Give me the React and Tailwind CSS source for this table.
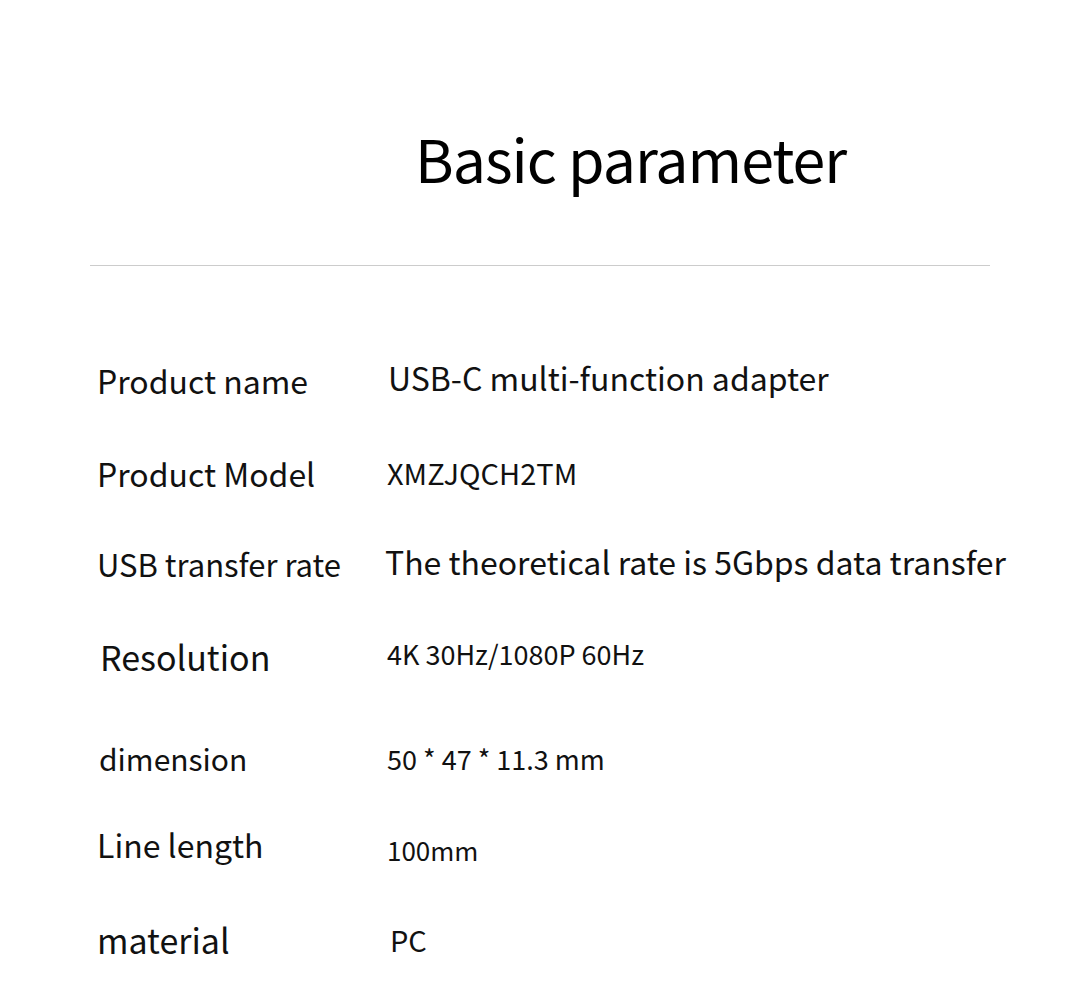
import React from 'react';

// each row: fixed height, label in a 290px column, value after it
const rows = [
    { label: 'Product name', value: 'USB-C multi-function adapter', h: 'h-[93px]', lCls: 'text-[32px] pt-[10px]', vCls: 'text-[32px] pt-[7px] pl-[1px]' },
    { label: 'Product Model', value: 'XMZJQCH2TM', h: 'h-[90px]', lCls: 'text-[32px] pt-[10px]', vCls: 'text-[29px] pt-[11px]' },
    { label: 'USB transfer rate', value: 'The theoretical rate is 5Gbps data transfer', h: 'h-[95px]', lCls: 'text-[31px] pt-[11px]', vCls: 'text-[32px] pt-[8px] -ml-[2px]' },
    { label: 'Resolution', value: '4K 30Hz/1080P 60Hz', h: 'h-[99px]', lCls: 'text-[34px] pt-[8px] pl-[3px]', vCls: 'text-[27px] pt-[8px]' },
    { label: 'dimension', value: '50 * 47 * 11.3 mm', h: 'h-[87px]', lCls: 'text-[30px] pt-[12px] pl-[2px]', vCls: 'text-[27px] pt-[14px]' },
    { label: 'Line length', value: '100mm', h: 'h-[97px]', lCls: 'text-[32px] pt-[10px]', vCls: 'text-[26px] pt-[19px]' },
    { label: 'material', value: 'PC', h: 'h-[85px]', lCls: 'text-[34px] pt-[8px]', vCls: 'text-[29px] pt-[10px] pl-[3px]' },
];

const App = () => {
    return (
        <div
            className="w-[1080px] h-[1000px] bg-white text-[#111] overflow-hidden"
            style={{ fontFamily: '"Noto Sans CJK SC", "Noto Sans", sans-serif' }}
        >
            <div className="pt-[128px] pl-[415px] h-[187px]">
                <h1 className="text-[59px] leading-none tracking-[-1px] text-black whitespace-nowrap">Basic parameter</h1>
            </div>
            <div className="mt-[78px] mx-[90px] h-px bg-[#cccccc]" />
            <div className="mt-[88px] pl-[97px]">
                {rows.map((row) => (
                    <div key={row.label} className={`flex items-start ${row.h}`}>
                        <div className={`w-[290px] shrink-0 leading-none whitespace-nowrap ${row.lCls}`}>{row.label}</div>
                        <div className={`leading-none whitespace-nowrap ${row.vCls}`}>{row.value}</div>
                    </div>
                ))}
            </div>
        </div>
    );
};

export default App;
